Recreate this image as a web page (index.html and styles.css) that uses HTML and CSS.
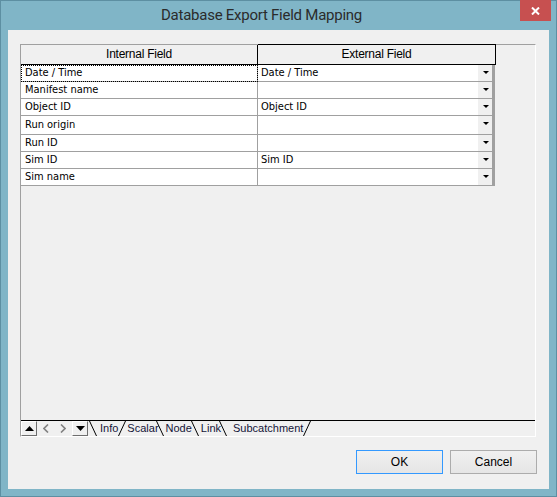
FILE: index.html
```html
<!DOCTYPE html>
<html lang="en">
<head>
    <meta charset="UTF-8">
    <title>Database Export Field Mapping</title>
    <link rel="stylesheet" href="styles.css">
</head>
<body>
    <div class="window">
        <div class="titlebar">
            <span class="title">Database Export Field Mapping</span>
            <div class="close-btn">
                <svg width="9" height="8" viewBox="0 0 9 8"><path d="M1 0.5 L8 7.5 M8 0.5 L1 7.5" stroke="#fff" stroke-width="2"/></svg>
            </div>
        </div>
        <div class="client">
            <div class="grid-frame">
                <div class="grid">
                    <div class="grid-row grid-head">
                        <div class="cell col-internal">Internal Field</div>
                        <div class="cell col-external">External Field</div>
                    </div>
                    <div class="grid-row">
                        <div class="cell col-internal focused">Date / Time</div>
                        <div class="cell col-external"><span>Date / Time</span><span class="drop"></span></div>
                    </div>
                    <div class="grid-row">
                        <div class="cell col-internal">Manifest name</div>
                        <div class="cell col-external"><span></span><span class="drop"></span></div>
                    </div>
                    <div class="grid-row">
                        <div class="cell col-internal">Object ID</div>
                        <div class="cell col-external"><span>Object ID</span><span class="drop"></span></div>
                    </div>
                    <div class="grid-row tall">
                        <div class="cell col-internal">Run origin</div>
                        <div class="cell col-external"><span></span><span class="drop"></span></div>
                    </div>
                    <div class="grid-row">
                        <div class="cell col-internal">Run ID</div>
                        <div class="cell col-external"><span></span><span class="drop"></span></div>
                    </div>
                    <div class="grid-row">
                        <div class="cell col-internal">Sim ID</div>
                        <div class="cell col-external"><span>Sim ID</span><span class="drop"></span></div>
                    </div>
                    <div class="grid-row">
                        <div class="cell col-internal">Sim name</div>
                        <div class="cell col-external"><span></span><span class="drop"></span></div>
                    </div>
                </div>
                <div class="sheet-tabs">
                    <div class="nav-btn">
                        <svg width="9" height="5" viewBox="0 0 9 5"><path d="M0 5 L4.5 0 L9 5 Z" fill="#000"/></svg>
                    </div>
                    <div class="nav-arrow">
                        <svg width="6" height="9" viewBox="0 0 6 9"><path d="M5 0.5 L1 4.5 L5 8.5" fill="none" stroke="#808080" stroke-width="1.6"/></svg>
                    </div>
                    <div class="nav-arrow">
                        <svg width="6" height="9" viewBox="0 0 6 9"><path d="M1 0.5 L5 4.5 L1 8.5" fill="none" stroke="#808080" stroke-width="1.6"/></svg>
                    </div>
                    <div class="nav-btn">
                        <svg width="9" height="5" viewBox="0 0 9 5"><path d="M0 0 L4.5 5 L9 0 Z" fill="#000"/></svg>
                    </div>
                    <svg class="sep first" width="8" height="15" viewBox="0 0 8 15"><path d="M0.5 0 L7.5 15" stroke="#000" stroke-width="1"/></svg>
                    <span class="tab tab-info">Info</span>
                    <svg class="sep" width="8" height="15" viewBox="0 0 8 15"><path d="M0.5 15 L7.5 0" stroke="#000" stroke-width="1"/></svg>
                    <span class="tab tab-scalar">Scalar</span>
                    <svg class="sep" width="8" height="15" viewBox="0 0 8 15"><path d="M0.5 0 L7.5 15" stroke="#000" stroke-width="1"/></svg>
                    <span class="tab tab-node">Node</span>
                    <svg class="sep" width="8" height="15" viewBox="0 0 8 15"><path d="M0.5 0 L7.5 15" stroke="#000" stroke-width="1"/></svg>
                    <span class="tab tab-link">Link</span>
                    <svg class="sep" width="8" height="15" viewBox="0 0 8 15"><path d="M0.5 0 L7.5 15" stroke="#000" stroke-width="1"/></svg>
                    <span class="tab tab-sub">Subcatchment</span>
                    <svg class="sep" width="8" height="15" viewBox="0 0 8 15"><path d="M0.5 15 L7.5 0" stroke="#000" stroke-width="1"/></svg>
                </div>
            </div>
            <div class="footer">
                <button class="btn btn-default">OK</button>
                <button class="btn">Cancel</button>
            </div>
        </div>
    </div>
</body>
</html>
```

FILE: styles.css
```css
body {
    margin: 0;
    font-family: "Liberation Sans", Arial, sans-serif;
}
.window {
    width: 557px;
    height: 497px;
    box-sizing: border-box;
    background-color: #80b5c7;
    border: 1px solid #5d8fa2;
}
.titlebar {
    position: relative;
    height: 29px;
    display: flex;
    justify-content: center;
    padding-right: 34px;
}
.title {
    font-family: Roboto, "Liberation Sans", sans-serif;
    font-size: 15px;
    line-height: 29px;
    letter-spacing: -0.25px;
    color: #2b2b2b;
}
.close-btn {
    position: absolute;
    top: -1px;
    right: 5px;
    width: 31px;
    height: 21px;
    background-color: #c75050;
    display: flex;
    justify-content: center;
    align-items: center;
}
.client {
    margin: 0 7px;
    height: 459px;
    box-sizing: border-box;
    background-color: #f0f0f0;
    padding: 14px 13px 0 12px;
}
.grid-frame {
    height: 393px;
    box-sizing: border-box;
    border-top: 1px solid #a0a0a0;
    border-left: 1px solid #a0a0a0;
    border-right: 1px solid #ffffff;
    border-bottom: 1px solid #ffffff;
    display: flex;
    flex-direction: column;
}
.grid {
    flex: 1;
}
.grid-row {
    display: flex;
    height: 17px;
}
.grid-row.tall {
    height: 19px;
}
.cell {
    box-sizing: border-box;
    height: 100%;
    font-family: "DejaVu Sans Condensed", "DejaVu Sans", sans-serif;
    font-size: 11px;
    color: #000;
    background-color: #ffffff;
    border-bottom: 1px solid #a0a0a0;
    line-height: 16px;
    white-space: nowrap;
}
.tall .cell {
    line-height: 18px;
}
.col-internal {
    width: 237px;
    border-right: 1px solid #a0a0a0;
    padding-left: 4px;
}
.col-external {
    width: 237px;
    display: flex;
    justify-content: space-between;
    padding-left: 3px;
}
.focused {
    outline: 1px dotted #000;
    outline-offset: -1px;
}
.drop {
    width: 18px;
    height: 100%;
    box-sizing: border-box;
    background-color: #f0f0f0;
    border-left: 1px solid #ffffff;
    border-right: 3px solid #a0a0a0;
    position: relative;
}
.drop::after {
    content: "";
    position: absolute;
    left: 5px;
    top: 6px;
    border-left: 3px solid transparent;
    border-right: 3px solid transparent;
    border-top: 3px solid #000;
}
.grid-head {
    height: 20px;
}
.grid-head .cell {
    font-family: "Liberation Sans", Arial, sans-serif;
    font-size: 12px;
    letter-spacing: -0.25px;
    background-color: #f0f0f0;
    border-bottom: 1px solid #000;
    text-align: center;
    line-height: 19px;
    padding-left: 0;
    display: block;
}
.grid-head .col-internal {
    border-right: 1px solid #000;
}
.grid-head .col-external {
    width: 238px;
    height: 21px;
    margin-top: -1px;
    border-top: 1px solid #000;
    border-right: 1px solid #000;
}
.sheet-tabs {
    height: 16px;
    box-sizing: border-box;
    border-top: 1px solid #000;
    display: flex;
    align-items: flex-start;
    font-size: 11px;
    color: #141438;
}
.nav-btn {
    width: 16px;
    height: 15px;
    box-sizing: border-box;
    border-top: 1px solid #ffffff;
    border-left: 1px solid #ffffff;
    border-right: 1px solid #6e6e6e;
    border-bottom: 1px solid #6e6e6e;
    display: flex;
    justify-content: center;
    align-items: center;
}
.nav-arrow {
    width: 17px;
    height: 15px;
    display: flex;
    justify-content: center;
    align-items: center;
}
.nav-arrow + .nav-arrow {
    width: 18px;
}
.sep {
    display: block;
    flex-shrink: 0;
}
.sep.first {
    margin-left: 1px;
}
.tab {
    line-height: 15px;
}
.tab-info {
    padding-left: 3px;
}
.tab-scalar {
    padding-left: 1px;
    margin-right: -3px;
}
.tab-node {
    padding-left: 2px;
    margin-right: -1px;
}
.tab-link {
    padding-left: 2px;
    margin-right: -2px;
}
.tab-sub {
    padding-left: 6px;
}
.footer {
    display: flex;
    justify-content: flex-end;
    gap: 7px;
    margin-top: 13px;
    margin-right: -1px;
}
.btn {
    width: 87px;
    height: 24px;
    box-sizing: border-box;
    border: 1px solid #acacac;
    background: linear-gradient(#f0f0f0, #e5e5e5);
    font-family: "Liberation Sans", Arial, sans-serif;
    font-size: 12px;
    color: #000;
    padding: 0;
}
.btn-default {
    border-color: #3399ff;
}
```
